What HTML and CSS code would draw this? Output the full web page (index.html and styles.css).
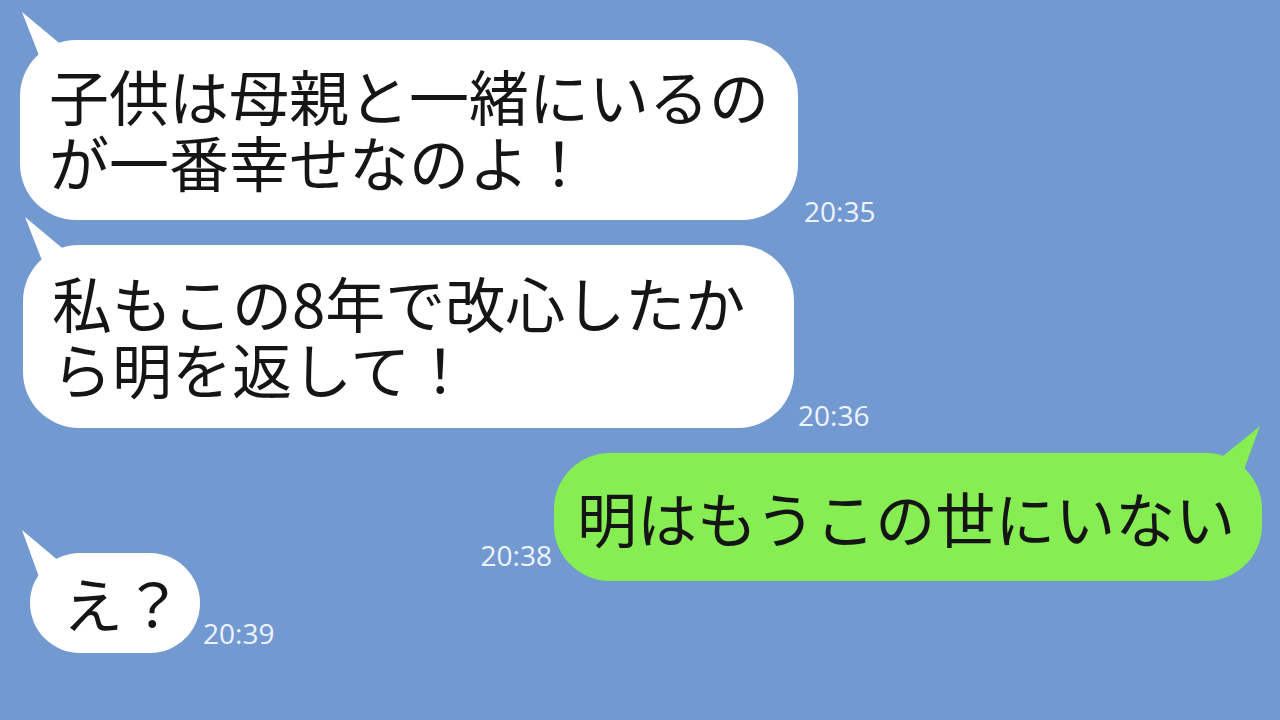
FILE: index.html
```html
<!DOCTYPE html>
<html lang="ja">
<head>
    <meta charset="UTF-8">
    <meta name="viewport" content="width=device-width, initial-scale=1.0">
    <title>トーク</title>
    <link rel="stylesheet" href="styles.css">
</head>
<body>
    <main class="chat">
        <section class="row row-first">
            <p class="bubble in b1">子供は母親と一緒にいるの<br>が一番幸せなのよ！</p>
            <span class="time t1">20:35</span>
        </section>
        <section class="row row-second">
            <p class="bubble in b2">私もこの8年で改心したか<br>ら明を返して！</p>
            <span class="time t2">20:36</span>
        </section>
        <section class="row row-mine">
            <span class="time t3">20:38</span>
            <p class="bubble out b3">明はもうこの世にいない</p>
        </section>
        <section class="row row-last">
            <p class="bubble in small b4">え？</p>
            <span class="time t4">20:39</span>
        </section>
    </main>
</body>
</html>
```

FILE: styles.css
```css
*{
    margin:0;
    box-sizing: border-box;
}
html,body{
    height:100%;
}
body{
    background-color: #7399d1;
    overflow: hidden;
}
.chat{
    display: flex;
    flex-direction: column;
    padding: 40px 18px 0 20px;
}
.row{
    display: flex;
    align-items: flex-end;
}
.row-second{
    margin-top: 25px;
    margin-left: 3px;
}
.row-mine{
    margin-top: 25px;
    justify-content: flex-end;
}
.row-last{
    margin-top: -28px;
    margin-left: 10px;
}
.bubble{
    position: relative;
    font-family: "Noto Sans CJK JP", "Noto Sans CJK SC", sans-serif;
    font-size: 60px;
    font-weight: 400;
    line-height: 66px;
    color: #151515;
    white-space: nowrap;
    border-radius: 56px;
}
.in{
    background-color: #ffffff;
}
.out{
    background-color: #86ee52;
}
/* tails */
.in::before{
    content: "";
    position: absolute;
    left: 0;
    top: -30px;
    width: 50px;
    height: 50px;
    background-color: #ffffff;
    clip-path: polygon(2px 2px, 20px 48px, 44px 37px);
}
.small::before{
    left: -10px;
    top: -25px;
    clip-path: polygon(2px 2px, 19px 49px, 40px 34px);
}
.out::before{
    content: "";
    position: absolute;
    right: 0;
    top: -30px;
    width: 50px;
    height: 60px;
    background-color: #86ee52;
    clip-path: polygon(48px 3px, 5px 38px, 30px 52px);
}
.b1{
    width: 778px;
    padding: 22px 0 26px 29px;
}
.b2{
    width: 771px;
    padding: 24px 0 27px 29px;
}
.b3{
    width: 708px;
    padding: 31px 0 31px 23px;
}
.b4{
    width: 170px;
    padding: 16px 0 18px 33px;
    border-radius: 50px;
}
.time{
    font-family: "Open Sans", "Noto Sans", sans-serif;
    font-size: 28px;
    line-height: 1;
    color: #eef4ff;
}
.t1{
    margin-left: 6px;
    margin-bottom: -5px;
}
.t2{
    margin-left: 4px;
    margin-bottom: -1px;
}
.t3{
    margin-right: 2px;
    margin-bottom: 12px;
}
.t4{
    margin-left: 3px;
    margin-bottom: 6px;
}
```
